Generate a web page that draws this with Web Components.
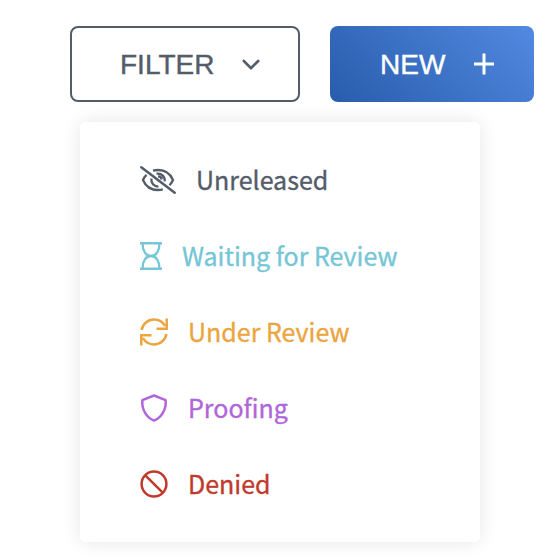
<!DOCTYPE html>
<html lang="en"><head><meta charset="utf-8"><title>Filter menu</title>
<style>html,body{margin:0;background:#fff}body{width:558px;height:556px;overflow:hidden}</style></head>
<body>
<filter-page></filter-page>
<script>
const icons = {
  down: '<svg width="20" height="13" viewBox="0 0 20 13"><path d="M2.800 3l7.200 7.200 7.200-7.200" stroke-width="2.600" stroke-linecap="round"/></svg>',
  plus: '<svg width="20" height="22" viewBox="0 0 20 22"><path d="M10 .5v21M0 11h20" stroke-width="3"/></svg>',
  hidden: '<svg width="36" height="28" viewBox="0 0 36 28"><path d="M1.3 1.3l33.4 25.4" stroke-width="2.5" stroke-linecap="round"/><path d="M13 4.7C15 4.1 16.5 4 18 4C25 4 30.5 8 33 14C32.2 16 31 17.7 29.5 19.2M6.5 8.8C5 10.2 3.8 12 3 14C5.5 20 11 24 18 24C19.7 24 21.3 23.8 22.8 23.4M11.4 12.5C10.7 17 14 20.5 18.5 20.6M16.5 7.7C21.8 6.9 25.3 11 24.6 15.4M18 10.3C19.8 10.3 21.5 11.5 21.8 13.5" stroke-width="2.3"/></svg>',
  hourglass: '<svg width="22" height="28" viewBox="0 0 22 28"><path d="M0 1.2h22M0 26.8h22" stroke-width="2.4"/><path d="M2.6 2C2.6 8.5 5.5 14 11 14S19.4 8.5 19.4 2M2.6 26C2.6 19.5 5.5 14 11 14S19.4 19.5 19.4 26" stroke-width="2.3"/></svg>',
  sync: '<svg width="28" height="28" viewBox="0 0 28 28"><path d="M1.6 12C2.7 5.8 7.8 1.6 14 1.6C18.8 1.6 22.8 4 25 8M26.7.5V10.7H16.5M26.4 16C25.3 22.2 20.2 26.4 14 26.4C9.2 26.4 5.2 24 3 20M1.3 27.5V17.3H11.5" stroke-width="2.5"/></svg>',
  shield: '<svg width="28" height="28" viewBox="0 0 28 28"><path d="M14 1.5L25 5.8Q25.6 6 25.7 6.8C26.3 15.5 21.5 23.5 14 26.6C6.500 23.500 1.700 15.500 2.300 6.800Q2.400 6 3 5.800Z" stroke-width="2.5" stroke-linejoin="round"/></svg>',
  ban: '<svg width="28" height="28" viewBox="0 0 28 28"><circle cx="14" cy="14" r="12.4" stroke-width="2.5"/><path d="M5.300 5.300l17.400 17.400" stroke-width="2.500"/></svg>'
};
const svgStyle = 'svg{display:block;flex:none;fill:none;stroke:currentColor;overflow:visible}';

class ActionButton extends HTMLElement {
  connectedCallback() {
    this.attachShadow({mode:'open'}).innerHTML = `<style>
      :host{display:flex;box-sizing:border-box;height:76px;align-items:center;border-radius:8px;padding-left:50px;font:28px/32px "Liberation Sans",Arial,sans-serif;color:#535c69}
      span{padding-top:1px;-webkit-text-stroke:.4px currentColor}
      :host([kind=filter]){width:230px;border:2px solid #535c69;padding-left:48px;gap:27px}
      :host([kind=new]){width:204px;color:#fff;background:linear-gradient(45deg,#285cab,#528ae1);gap:29px}
      ${svgStyle}</style><span><slot></slot></span>${icons[this.getAttribute('icon')]}`;
  }
}
class StatusItem extends HTMLElement {
  connectedCallback() {
    this.attachShadow({mode:'open'}).innerHTML = `<style>
      :host{display:flex;height:36px;align-items:center;gap:20px;white-space:nowrap;font:400 25px/34px "Noto Sans CJK SC","Noto Sans",sans-serif}
      span{padding-bottom:2px;-webkit-text-stroke:.35px currentColor}
      ${svgStyle}</style>${icons[this.getAttribute('icon')]}<span><slot></slot></span>`;
  }
}
class StatusMenu extends HTMLElement {
  connectedCallback() {
    this.attachShadow({mode:'open'}).innerHTML = `<style>
      :host{display:flex;flex-direction:column;gap:40px;box-sizing:border-box;width:400px;height:420px;margin:20px 0 0 80px;padding:40px 60px;border-radius:6px;background:#fff;box-shadow:0 0 20px rgba(0,0,0,.1)}
      </style><slot></slot>`;
  }
}
class FilterPage extends HTMLElement {
  connectedCallback() {
    this.attachShadow({mode:'open'}).innerHTML = `<style>
      :host{display:block;padding-top:26px}
      .bar{display:flex;gap:30px;padding-left:70px}
      </style>
      <div class="bar"><action-button kind="filter" icon="down">FILTER</action-button><action-button kind="new" icon="plus">NEW</action-button></div>
      <status-menu>
        <status-item icon="hidden" style="color:#535c69">Unreleased</status-item>
        <status-item icon="hourglass" style="color:#75c6d6">Waiting for Review</status-item>
        <status-item icon="sync" style="color:#eba53f">Under Review</status-item>
        <status-item icon="shield" style="color:#b066d9">Proofing</status-item>
        <status-item icon="ban" style="color:#c03a2b">Denied</status-item>
      </status-menu>`;
  }
}
customElements.define('action-button', ActionButton);
customElements.define('status-item', StatusItem);
customElements.define('status-menu', StatusMenu);
customElements.define('filter-page', FilterPage);
</script>
</body></html>
